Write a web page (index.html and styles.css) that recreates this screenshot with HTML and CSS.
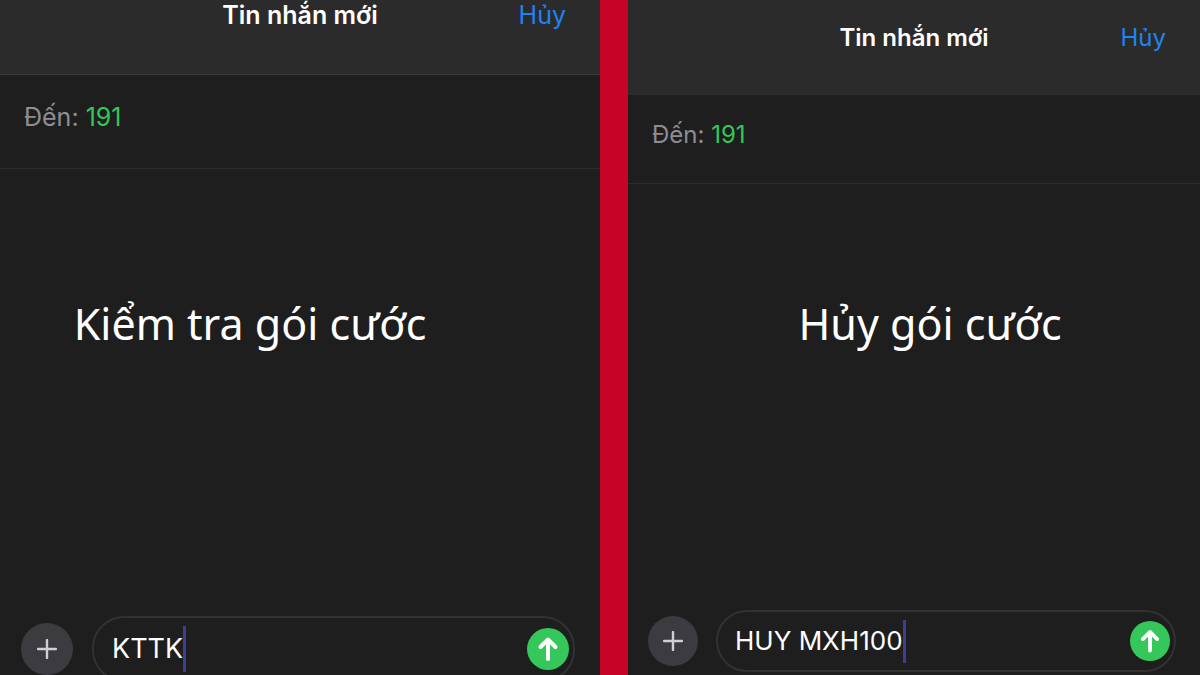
FILE: index.html
```
<!DOCTYPE html>
<html lang="vi">
<head>
  <meta charset="UTF-8">
  <meta name="viewport" content="width=device-width, initial-scale=1.0">
  <title>Tin nhắn mới</title>
  <link rel="stylesheet" href="styles.css">
</head>
<body>
  <main class="compare">
    <section class="screen screen-check">
      <header class="topbar">
        <h1>Tin nhắn mới</h1>
        <button type="button" class="cancel">Hủy</button>
      </header>
      <p class="recipient">Đến: <a href="sms:191">191</a></p>
      <h2 class="caption">Kiểm tra gói cước</h2>
      <form class="composer">
        <button type="button" class="add" aria-label="Thêm">
          <svg viewBox="0 0 20 20"><path d="M10 1v18M1 10h18"/></svg>
        </button>
        <div class="field">
          <input type="text" value="KTTK" aria-label="Tin nhắn">
          <span class="caret"></span>
          <button type="button" class="send" aria-label="Gửi">
            <svg viewBox="0 0 42 42"><path d="M21 31V12M13.500 19L21 11.500L28.500 19"/></svg>
          </button>
        </div>
      </form>
    </section>

    <section class="screen screen-stop">
      <header class="topbar">
        <h1>Tin nhắn mới</h1>
        <button type="button" class="cancel">Hủy</button>
      </header>
      <p class="recipient">Đến: <a href="sms:191">191</a></p>
      <h2 class="caption">Hủy gói cước</h2>
      <form class="composer">
        <button type="button" class="add" aria-label="Thêm">
          <svg viewBox="0 0 20 20"><path d="M10 1v18M1 10h18"/></svg>
        </button>
        <div class="field">
          <input type="text" value="HUY MXH100" aria-label="Tin nhắn">
          <span class="caret"></span>
          <button type="button" class="send" aria-label="Gửi">
            <svg viewBox="0 0 42 42"><path d="M21 31V12M13.500 19L21 11.500L28.500 19"/></svg>
          </button>
        </div>
      </form>
    </section>
  </main>
</body>
</html>
```
FILE: styles.css
```
* {
  box-sizing: border-box;
}
body {
  margin: 0;
  font-family: Inter, "Noto Sans", sans-serif;
  background-color: #c70428;
  color: #ffffff;
}
h1, h2, p {
  margin: 0;
  font-weight: 400;
}
button {
  padding: 0;
  border: none;
  background: none;
  font: inherit;
  cursor: pointer;
}
.compare {
  display: flex;
  gap: 28px;
  height: 100vh;
  overflow: hidden;
}
.screen {
  display: flex;
  flex-direction: column;
  background-color: #1e1e1e;
  line-height: 30px;
}
.screen-check {
  flex: 600 1 0;
  height: calc(100% + 7px);
  font-size: 25px;
}
.screen-stop {
  flex: 572 1 0;
  font-size: 24px;
}

/* top bar */
.topbar {
  display: grid;
  grid-template-columns: 1fr auto 1fr;
  padding: 0 34px 44px;
  background-color: #2b2b2b;
  border-bottom: 1px solid #373737;
}
.screen-stop .topbar {
  padding-top: 23px;
  padding-bottom: 41px;
  border-bottom-color: #2d2d2d;
}
.topbar h1 {
  grid-column: 2;
  font-size: inherit;
  font-weight: 600;
}
.cancel {
  justify-self: end;
  color: #1f83f2;
}

.recipient {
  padding: 27px 24px 36px;
  border-bottom: 1px solid #2d2d2f;
  color: #8e8d93;
}
.screen-stop .recipient {
  padding-top: 25px;
  padding-bottom: 33px;
}
.recipient a {
  color: #32c759;
  text-decoration: none;
}

.caption {
  flex: 1;
  padding-top: 125px;
  padding-right: 100px;
  font-family: "Noto Sans", sans-serif;
  font-size: 43px;
  line-height: 60px;
  text-align: center;
}
.screen-stop .caption {
  padding: 110px 0 0 32px;
}

/* message box */
.composer {
  display: flex;
  align-items: center;
  gap: 19px;
  padding: 0 25px 0 21px;
}
.screen-stop .composer {
  gap: 18px;
  padding: 0 24px 3px 20px;
}
.add {
  display: grid;
  place-items: center;
  flex: none;
  width: 52px;
  height: 52px;
  border-radius: 50%;
  background-color: #3c3b40;
}
.add svg {
  width: 20px;
  height: 20px;
  fill: none;
  stroke: #cfced3;
  stroke-width: 2.4;
  stroke-linecap: round;
}
.field {
  display: flex;
  align-items: center;
  flex: 1;
  min-width: 0;
  height: 66px;
  padding: 0 4px 0 18px;
  border: 2px solid #323234;
  border-radius: 32px;
}
.field input {
  field-sizing: content;
  min-width: 0;
  padding: 0;
  border: none;
  outline: none;
  background: none;
  color: #ffffff;
  font: inherit;
  font-size: 27px;
}
.caret {
  flex: none;
  width: 3px;
  height: 46px;
  background-color: #3b3f93;
}
.send {
  flex: none;
  width: 42px;
  height: 42px;
  margin-left: auto;
  border-radius: 50%;
  background-color: #35c759;
}
.send svg {
  display: block;
  width: 100%;
  fill: none;
  stroke: #ffffff;
  stroke-width: 4;
  stroke-linecap: round;
  stroke-linejoin: round;
}
.screen-stop .add {
  width: 50px;
  height: 50px;
}
.screen-stop .field {
  height: 62px;
  padding-left: 17px;
}
.screen-stop .field input {
  font-size: 26px;
}
.screen-stop .caret {
  height: 43px;
}
.screen-stop .send {
  width: 40px;
  height: 40px;
}
```
